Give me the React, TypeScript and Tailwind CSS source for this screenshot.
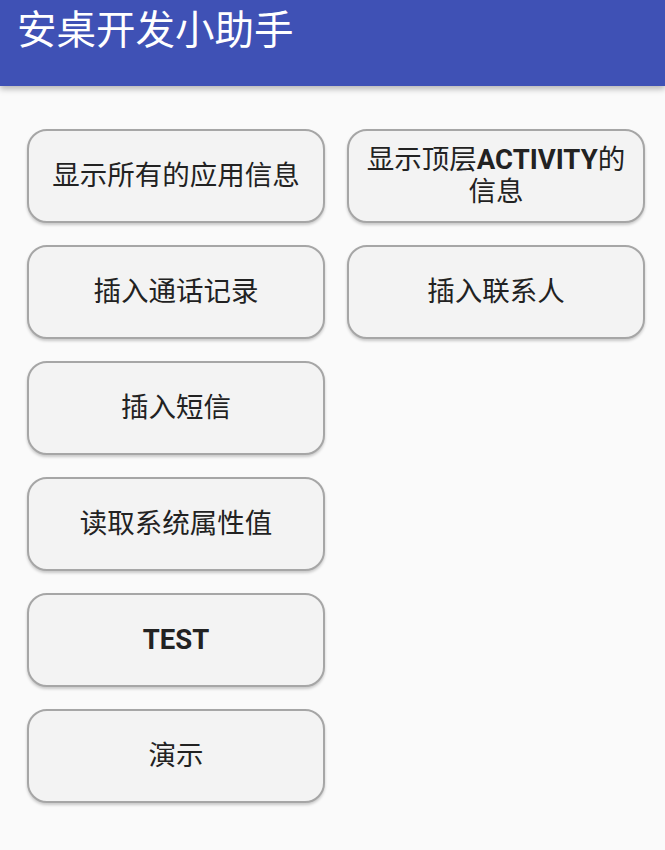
import React from "react"

const buttons: { label: string; col: number; row: number }[] = [
  { label: "显示所有的应用信息", col: 1, row: 1 },
  { label: "显示顶层ACTIVITY的信息", col: 2, row: 1 },
  { label: "插入通话记录", col: 1, row: 2 },
  { label: "插入联系人", col: 2, row: 2 },
  { label: "插入短信", col: 1, row: 3 },
  { label: "读取系统属性值", col: 1, row: 4 },
  { label: "TEST", col: 1, row: 5 },
  { label: "演示", col: 1, row: 6 },
]

const rowClass = ["row-start-1", "row-start-2", "row-start-3", "row-start-4", "row-start-5", "row-start-6"]

// latin runs render in Roboto bold, CJK stays regular
const Label: React.FC<{ text: string }> = ({ text }) => (
  <>
    {text.split(/([A-Za-z]+)/).map((part, i) =>
      /^[A-Za-z]+$/.test(part) ? (
        <span key={i} className="font-bold">
          {part}
        </span>
      ) : (
        <span key={i}>{part}</span>
      )
    )}
  </>
)

const App: React.FC = () => {
  return (
    <div
      className="w-[665px] h-[850px] bg-[#fafafa] overflow-hidden"
      style={{ fontFamily: 'Roboto, "Noto Sans CJK SC", sans-serif' }}
    >
      <header className="relative h-[86px] bg-[#3f51b5] shadow-[0_3px_6px_rgba(0,0,0,0.28)] pl-[17px] pt-[5px]">
        <h1 className="text-[39.5px] leading-[52px] text-white font-normal">安桌开发小助手</h1>
      </header>

      <div className="grid grid-cols-[298px_298px] gap-x-[22px] gap-y-[22px] pl-[27px] pt-[43px]">
        {buttons.map((b) => (
          <button
            key={b.label}
            className={`h-[94px] rounded-[20px] border-2 border-[#a6a6a6] bg-[#f3f3f3] shadow-[0_2px_3px_rgba(0,0,0,0.2)] px-3 text-[27.5px] leading-[32px] text-[#222] font-normal text-center ${
              b.col === 1 ? "col-start-1" : "col-start-2"
            } ${rowClass[b.row - 1]}`}
          >
            <Label text={b.label} />
          </button>
        ))}
      </div>
    </div>
  )
}

export default App
